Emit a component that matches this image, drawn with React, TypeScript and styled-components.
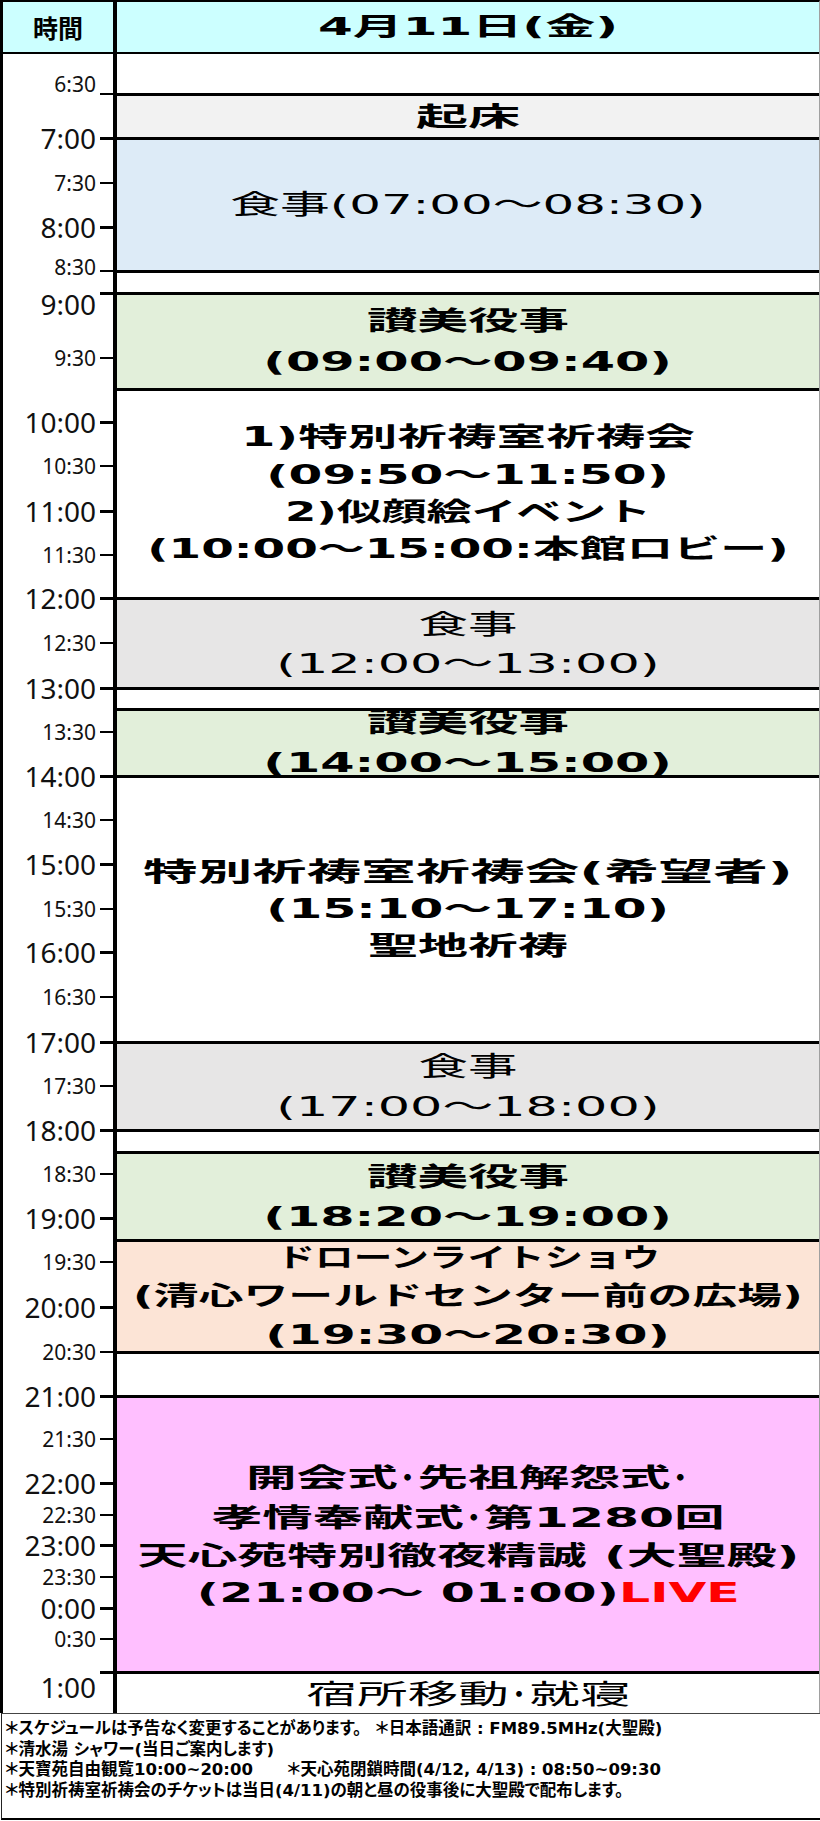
import React, { useLayoutEffect, useRef, useState } from "react";
import styled, { createGlobalStyle } from "styled-components";

const GlobalStyle = createGlobalStyle`
  html, body { margin: 0; padding: 0; background: #fff; }
  body { width: 820px; height: 1821px; overflow: hidden; }
  *, *::before, *::after { box-sizing: border-box; }
`;

const Page = styled.div`
  width: 820px;
  height: 1821px;
  display: flex;
  flex-direction: column;
  background: #fff;
`;

const Sheet = styled.div`
  display: flex;
  flex-direction: column;
  border-top: 2px solid #000;
  border-left: 3px solid #000;
  border-right: 1px solid #a0a0a0;
`;

const HeaderRow = styled.div`
  display: flex;
  height: 52px;
  border-bottom: 2px solid #000;
  background: #ccffff;
`;

const HeaderTime = styled.div`
  width: 114px;
  flex: none;
  border-right: 4px solid #000;
  display: flex;
  align-items: center;
  justify-content: center;
  font-family: "Noto Sans CJK JP", sans-serif;
  font-weight: 700;
  font-size: 25px;
  color: #000;
`;

const HeaderDate = styled.div`
  flex: 1;
  display: flex;
  align-items: center;
  justify-content: center;
  font-family: "DejaVu Sans", "Noto Sans CJK JP", sans-serif;
  font-weight: 700;
  font-size: 25px;
  line-height: 30px;
  color: #000;
`;

const Body = styled.div`
  display: flex;
`;

const TimeCol = styled.div`
  width: 114px;
  flex: none;
  border-right: 4px solid #000;
  display: flex;
  flex-direction: column;
`;

const TickSpacer = styled.div<{ $h: number }>`
  height: ${(p) => p.$h}px;
  flex: none;
`;

const TickSlot = styled.div<{ $h: number }>`
  height: ${(p) => p.$h}px;
  flex: none;
  display: flex;
  justify-content: flex-end;
  align-items: flex-start;
`;

const TimeLabel = styled.span<{ $hour: boolean; $dy: number }>`
  font-family: "Noto Sans", "Open Sans", sans-serif;
  font-size: ${(p) => (p.$hour ? 28 : 21)}px;
  line-height: 30px;
  height: 30px;
  margin-top: ${(p) => -15 + p.$dy}px;
  margin-right: 4px;
  color: #111;
  white-space: nowrap;
`;

const TickMark = styled.span<{ $hour: boolean }>`
  width: 13px;
  height: ${(p) => (p.$hour ? 3 : 2)}px;
  margin-top: -1px;
  background: #000;
  flex: none;
`;

const EventCol = styled.div`
  flex: 1;
  display: flex;
  flex-direction: column;
`;

const Block = styled.section<{ $h: number; $bg: string; $line: boolean }>`
  height: ${(p) => p.$h}px;
  flex: none;
  background: ${(p) => p.$bg};
  border-top: ${(p) => (p.$line ? "3px solid #000" : "none")};
  display: flex;
  flex-direction: column;
  justify-content: center;
  align-items: center;
  overflow: hidden;
`;

const EventText = styled.div<{ $bold: boolean; $lh: number }>`
  width: 100%;
  display: flex;
  flex-direction: column;
  align-items: center;
  font-family: "DejaVu Sans", "Noto Sans CJK JP", sans-serif;
  font-weight: ${(p) => (p.$bold ? 700 : 400)};
  font-size: ${(p) => (p.$bold ? 26 : 27)}px;
  line-height: ${(p) => p.$lh}px;
  color: #000;
  flex: none;
`;

const LineBox = styled.div`
  width: 100%;
  text-align: center;
  white-space: nowrap;
`;

const Stretch = styled.span`
  display: inline-block;
  transform-origin: 50% 50%;
`;

/* a katakana middle dot that keeps its round shape inside a stretched line */
const Dot = styled.span`
  display: inline-block;
  margin: 0 -8px;
  font-family: "Noto Sans CJK JP", sans-serif;
  transform: scaleX(calc(1 / var(--sx, 1)));
`;

const Live = styled.span`
  color: #ff0000;
`;

const Footer = styled.footer`
  height: 107px;
  margin-left: 1px;
  border-top: 1px solid #444;
  border-left: 1px solid #222;
  border-bottom: 2px solid #000;
  padding: 5px 0 0 3px;
  font-family: "DejaVu Sans", "Noto Sans CJK JP", sans-serif;
  font-weight: 700;
  font-size: 16.5px;
  line-height: 20.7px;
  color: #000;
  font-feature-settings: "palt";
`;

const NoteLine = styled.div`
  white-space: pre;
`;

const Note = styled.span<{ $gap?: number }>`
  margin-left: ${(p) => p.$gap ?? 0}px;
`;

const FitLine: React.FC<{ w: number; children: React.ReactNode }> = ({ w, children }) => {
  const ref = useRef<HTMLSpanElement>(null);
  const [sx, setSx] = useState(1);
  useLayoutEffect(() => {
    const fit = () => {
      const el = ref.current;
      if (el && el.offsetWidth) setSx(w / el.offsetWidth);
    };
    fit();
    if (document.fonts) document.fonts.ready.then(fit);
  }, [w]);
  return (
    <LineBox>
      <Stretch
        ref={ref}
        style={{ transform: `scaleX(${sx})`, ["--sx" as string]: sx } as React.CSSProperties}
      >
        {children}
      </Stretch>
    </LineBox>
  );
};

type Tick = { y: number; label: string; hour: boolean; dy?: number };

const TICKS: Tick[] = [
  { y: 94, label: "6:30", hour: false, dy: -10 },
  { y: 138, label: "7:00", hour: true },
  { y: 183, label: "7:30", hour: false },
  { y: 227, label: "8:00", hour: true },
  { y: 271, label: "8:30", hour: false, dy: -4 },
  { y: 293, label: "9:00", hour: true, dy: 11 },
  { y: 358, label: "9:30", hour: false },
  { y: 422, label: "10:00", hour: true },
  { y: 466, label: "10:30", hour: false },
  { y: 511, label: "11:00", hour: true },
  { y: 555, label: "11:30", hour: false },
  { y: 598, label: "12:00", hour: true },
  { y: 643, label: "12:30", hour: false },
  { y: 688, label: "13:00", hour: true },
  { y: 732, label: "13:30", hour: false },
  { y: 776, label: "14:00", hour: true },
  { y: 820, label: "14:30", hour: false },
  { y: 864, label: "15:00", hour: true },
  { y: 909, label: "15:30", hour: false },
  { y: 952, label: "16:00", hour: true },
  { y: 997, label: "16:30", hour: false },
  { y: 1042, label: "17:00", hour: true },
  { y: 1086, label: "17:30", hour: false },
  { y: 1130, label: "18:00", hour: true },
  { y: 1174, label: "18:30", hour: false },
  { y: 1218, label: "19:00", hour: true },
  { y: 1262, label: "19:30", hour: false },
  { y: 1307, label: "20:00", hour: true },
  { y: 1352, label: "20:30", hour: false },
  { y: 1396, label: "21:00", hour: true },
  { y: 1439, label: "21:30", hour: false },
  { y: 1483, label: "22:00", hour: true },
  { y: 1515, label: "22:30", hour: false },
  { y: 1545, label: "23:00", hour: true },
  { y: 1577, label: "23:30", hour: false },
  { y: 1608, label: "0:00", hour: true },
  { y: 1639, label: "0:30", hour: false },
  { y: 1672, label: "1:00", hour: true, dy: 15 },
];

const BODY_TOP = 54;
const BODY_BOTTOM = 1713;

type Line = { t: React.ReactNode; w: number };
type Ev = { h: number; bg: string; line: boolean; bold?: boolean; lh?: number; lines: Line[] };

const WHITE = "#ffffff";
const GREEN = "#e2efda";
const MEAL = "#e7e6e6";

const EVENTS: Ev[] = [
  { h: 39, bg: WHITE, line: false, lines: [] },
  { h: 44, bg: "#f2f2f2", line: true, bold: true, lh: 40, lines: [{ t: "起床", w: 104 }] },
  { h: 133, bg: "#ddebf7", line: true, lh: 40, lines: [{ t: "食事(07:00～08:30)", w: 476 }] },
  { h: 22, bg: WHITE, line: true, lines: [] },
  {
    h: 96, bg: GREEN, line: true, bold: true, lh: 41,
    lines: [{ t: "讃美役事", w: 202 }, { t: "(09:00～09:40)", w: 408 }],
  },
  {
    h: 209, bg: WHITE, line: true, bold: true, lh: 37.3,
    lines: [
      { t: "1)特別祈祷室祈祷会", w: 454 },
      { t: "(09:50～11:50)", w: 402 },
      { t: "2)似顔絵イベント", w: 366 },
      { t: "(10:00～15:00:本館ロビー)", w: 642 },
    ],
  },
  {
    h: 90, bg: MEAL, line: true, lh: 39,
    lines: [{ t: "食事", w: 99 }, { t: "(12:00～13:00)", w: 384 }],
  },
  { h: 21, bg: WHITE, line: true, lines: [] },
  {
    h: 67, bg: GREEN, line: true, bold: true, lh: 40,
    lines: [{ t: "讃美役事", w: 202 }, { t: "(14:00～15:00)", w: 408 }],
  },
  {
    h: 266, bg: WHITE, line: true, bold: true, lh: 37,
    lines: [
      { t: "特別祈祷室祈祷会(希望者)", w: 650 },
      { t: "(15:10～17:10)", w: 402 },
      { t: "聖地祈祷", w: 200 },
    ],
  },
  {
    h: 88, bg: MEAL, line: true, lh: 40,
    lines: [{ t: "食事", w: 99 }, { t: "(17:00～18:00)", w: 384 }],
  },
  { h: 22, bg: WHITE, line: true, lines: [] },
  {
    h: 88, bg: GREEN, line: true, bold: true, lh: 40,
    lines: [{ t: "讃美役事", w: 202 }, { t: "(18:20～19:00)", w: 408 }],
  },
  {
    h: 112, bg: "#fce4d6", line: true, bold: true, lh: 38.5,
    lines: [
      { t: "ドローンライトショウ", w: 384 },
      { t: "(清心ワールドセンター前の広場)", w: 670 },
      { t: "(19:30～20:30)", w: 404 },
    ],
  },
  { h: 44, bg: WHITE, line: true, lines: [] },
  {
    h: 276, bg: "#ffbfff", line: true, bold: true, lh: 37.3,
    lines: [
      {
        t: (
          <>
            開会式<Dot>・</Dot>先祖解怨式<Dot>・</Dot>
          </>
        ),
        w: 444,
      },
      {
        t: (
          <>
            孝情奉献式<Dot>・</Dot>第1280回
          </>
        ),
        w: 512,
      },
      { t: "天心苑特別徹夜精誠 (大聖殿)", w: 662 },
      {
        t: (
          <>
            (21:00～ 01:00)<Live>LIVE</Live>
          </>
        ),
        w: 542,
      },
    ],
  },
  {
    h: 42, bg: WHITE, line: true, lh: 40,
    lines: [
      {
        t: (
          <>
            宿所移動<Dot>・</Dot>就寝
          </>
        ),
        w: 324,
      },
    ],
  },
];

export default function App() {
  const slots = TICKS.map((tk, i) => ({
    ...tk,
    h: (i < TICKS.length - 1 ? TICKS[i + 1].y : BODY_BOTTOM) - tk.y,
  }));

  return (
    <>
      <GlobalStyle />
      <Page>
        <Sheet>
          <HeaderRow>
            <HeaderTime>時間</HeaderTime>
            <HeaderDate>
              <FitLine w={300}>4月11日(金)</FitLine>
            </HeaderDate>
          </HeaderRow>
          <Body>
            <TimeCol>
              <TickSpacer $h={TICKS[0].y - BODY_TOP} />
              {slots.map((s) => (
                <TickSlot key={s.label} $h={s.h}>
                  <TimeLabel $hour={s.hour} $dy={s.dy ?? 0}>
                    {s.label}
                  </TimeLabel>
                  <TickMark $hour={s.hour} />
                </TickSlot>
              ))}
            </TimeCol>
            <EventCol>
              {EVENTS.map((ev, i) => (
                <Block key={i} $h={ev.h} $bg={ev.bg} $line={ev.line}>
                  {ev.lines.length > 0 && (
                    <EventText $bold={!!ev.bold} $lh={ev.lh ?? 40}>
                      {ev.lines.map((ln, j) => (
                        <FitLine key={j} w={ln.w}>
                          {ln.t}
                        </FitLine>
                      ))}
                    </EventText>
                  )}
                </Block>
              ))}
            </EventCol>
          </Body>
        </Sheet>
        <Footer>
          <NoteLine>
            ＊スケジュールは予告なく変更することがあります。
            <Note $gap={14}>＊日本語通訳 : FM89.5MHz(大聖殿)</Note>
          </NoteLine>
          <NoteLine>＊清水湯 シャワー(当日ご案内します)</NoteLine>
          <NoteLine>
            ＊天寶苑自由観覧10:00~20:00
            <Note $gap={34}>＊天心苑閉鎖時間(4/12, 4/13) : 08:50~09:30</Note>
          </NoteLine>
          <NoteLine>＊特別祈祷室祈祷会のチケットは当日(4/11)の朝と昼の役事後に大聖殿で配布します。</NoteLine>
        </Footer>
      </Page>
    </>
  );
}
